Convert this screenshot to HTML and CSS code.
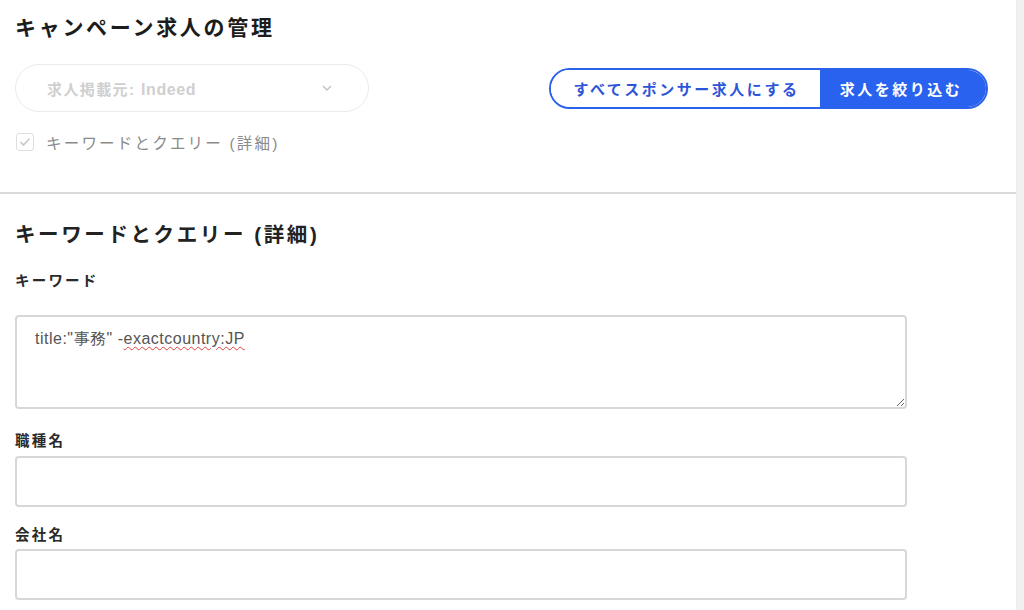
FILE: index.html
```html
<!DOCTYPE html>
<html lang="ja">
<head>
<meta charset="utf-8">
<title>キャンペーン求人の管理</title>
<link rel="stylesheet" href="styles.css">
</head>
<body>
<div class="page">
  <main class="main">
    <section class="top">
      <h1 class="title">キャンペーン求人の管理</h1>
      <div class="controls">
        <div class="select">
          <span class="select-text">求人掲載元: <span class="latin">Indeed</span></span>
          <svg class="chev" width="10" height="6" viewBox="0 0 10 6"><path d="M1 1l4 4 4-4" fill="none" stroke="#c4c4c4" stroke-width="1.5"/></svg>
        </div>
        <div class="btn-group">
          <button class="btn btn-outline">すべてスポンサー求人にする</button>
          <button class="btn btn-fill">求人を絞り込む</button>
        </div>
      </div>
      <label class="check-row">
        <span class="checkbox"><svg width="12" height="10" viewBox="0 0 12 10"><path d="M1.5 5l3 3 6-6.5" fill="none" stroke="#c8c8c8" stroke-width="1.6"/></svg></span>
        <span class="check-label">キーワードとクエリー (詳細)</span>
      </label>
    </section>
    <section class="bottom">
      <h2 class="subtitle">キーワードとクエリー (詳細)</h2>
      <div class="label label-kw">キーワード</div>
      <div class="textarea">title:"事務" -<span class="spell">exactcountry:JP</span></div>
      <div class="label label-job">職種名</div>
      <div class="input input-job"></div>
      <div class="label label-co">会社名</div>
      <div class="input input-co"></div>
    </section>
  </main>
  <div class="strip"></div>
</div>
</body>
</html>
```
FILE: styles.css
```css
* { box-sizing: border-box; }
html, body { margin: 0; padding: 0; }
body {
  background: #fff;
  font-family: "Liberation Sans", "Noto Sans CJK JP", sans-serif;
  color: #222;
  overflow: hidden;
}
.page {
  display: flex;
  width: 1024px;
  height: 610px;
}
.main {
  flex: 1;
  min-width: 0;
}
.strip {
  width: 8px;
  background: #f1f1f1;
  border-left: 1px solid #ececec;
}
.top {
  padding: 13px 28px 0 15px;
  height: 194px;
  border-bottom: 2px solid #dadada;
}
.title {
  margin: 0;
  font-size: 21px;
  line-height: 30px;
  font-weight: 700;
  letter-spacing: 2.7px;
  color: #1c1c1c;
}
.controls {
  margin-top: 21px;
  display: flex;
  align-items: center;
  justify-content: space-between;
}
.select {
  width: 354px;
  height: 48px;
  border: 1.5px solid #ebebeb;
  border-radius: 24px;
  display: flex;
  align-items: center;
  justify-content: space-between;
  padding: 0 36px 0 31px;
}
.select-text {
  font-size: 15px;
  font-weight: 700;
  color: #cfcfcf;
  letter-spacing: 1.4px;
}
.select-text .latin {
  font-size: 16px;
  letter-spacing: 0.6px;
}
.chev { display: block; }
.btn-group {
  display: flex;
  height: 41px;
  border: 2px solid #2b62ea;
  border-radius: 21px;
  overflow: hidden;
}
.btn {
  border: 0;
  margin: 0;
  font-family: inherit;
  font-size: 15px;
  font-weight: 700;
  letter-spacing: 2.5px;
  padding: 0;
}
.btn-outline {
  width: 269px;
  background: #fff;
  color: #2e55d8;
  padding-left: 2px;
}
.btn-fill {
  width: 166px;
  background: #2862ee;
  color: #fff;
  padding-right: 4px;
}
.check-row {
  margin-top: 20px;
  display: flex;
  align-items: center;
  height: 20px;
}
.checkbox {
  width: 18px;
  height: 18px;
  margin-left: 1px;
  border: 1px solid #dedede;
  border-radius: 3px;
  display: flex;
  align-items: center;
  justify-content: center;
}
.check-label {
  margin-left: 12px;
  font-size: 15.5px;
  color: #8a8a8a;
  letter-spacing: 2.2px;
}
.bottom {
  padding: 26px 0 0 15px;
  width: 907px;
}
.subtitle {
  margin: 0;
  font-size: 20.5px;
  line-height: 30px;
  font-weight: 700;
  letter-spacing: 2.6px;
  color: #222;
}
.label {
  font-size: 14.5px;
  line-height: 22px;
  font-weight: 700;
  letter-spacing: 2.2px;
  color: #2a2a2a;
}
.label-kw { margin-top: 20px; }
.label-job { margin-top: 21px; }
.label-co { margin-top: 17px; }
.textarea {
  margin-top: 23px;
  height: 94px;
  border: 2px solid #d7d7d7;
  border-radius: 4px;
  padding: 12px 18px;
  font-family: "Liberation Sans", Arial, sans-serif;
  font-size: 16px;
  letter-spacing: 0.5px;
  color: #555;
  overflow: auto;
  resize: both;
}
.spell {
  text-decoration: underline wavy #e0423c;
  text-decoration-thickness: 1px;
  text-underline-offset: 2px;
}
.input {
  height: 51px;
  border: 2px solid #d7d7d7;
  border-radius: 4px;
}
.input-job { margin-top: 4px; }
.input-co { margin-top: 3px; }
```
